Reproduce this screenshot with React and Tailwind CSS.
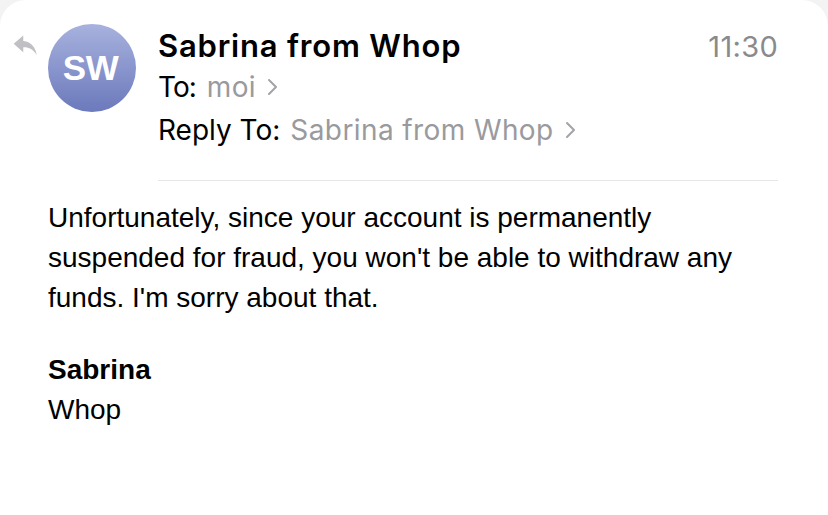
import React from "react";

const header = { fontFamily: "Inter, 'Liberation Sans', sans-serif" };
const body = { fontFamily: "'Liberation Sans', Arial, sans-serif" };

function ReplyIcon() {
  return (
    <svg viewBox="0 0 24 20" className="w-[27px] h-[23px]" fill="#bfbfc4">
      <path d="M10 1 L1.5 8.5 L10 16 V11.6 C15 11.4 18.6 13.2 22 18.5 C21 12.5 17.5 6.6 10 6 Z" />
    </svg>
  );
}

function Chevron() {
  return (
    <svg viewBox="0 0 11 18" className="w-[11px] h-[18px] ml-[11px] inline-block" fill="none" stroke="#a3a3a8" strokeWidth="2" strokeLinecap="round" strokeLinejoin="round">
      <path d="M2 2 L9 9 L2 16" />
    </svg>
  );
}

export default function App() {
  return (
    <div className="w-[828px] h-[515px] bg-[#f3f3f3] overflow-hidden">
      <div className="h-full bg-white rounded-t-[26px]">
        <div className="flex pt-[24px] pr-[50px]">
          <div className="w-[48px] flex justify-center pt-[10px] pl-[2px]">
            <ReplyIcon />
          </div>
          <div className="w-[88px] h-[88px] rounded-full bg-linear-to-b from-[#a8b2de] to-[#6c79bb] flex items-center justify-center shrink-0">
            <span className="text-white font-bold text-[35px] tracking-[-0.5px] -ml-[3px]" style={body}>SW</span>
          </div>
          <div className="flex-1 ml-[22px] mt-[2px]" style={header}>
            <div className="flex items-baseline justify-between">
              <span className="text-[31px] font-semibold text-black leading-[40px] tracking-[0.8px]">Sabrina from Whop</span>
              <span className="text-[29px] text-[#8a8a8e] leading-[40px] tracking-[0.3px]">11:30</span>
            </div>
            <div className="flex items-center text-[28px] leading-[40px] text-black">
              <span className="tracking-[-1px]">To:</span>
              <span className="ml-[11px] text-[#9a9a9e] tracking-[0.4px]">moi</span>
              <Chevron />
            </div>
            <div className="flex items-center text-[28px] leading-[44px] text-black mt-[1px]">
              <span>Reply To:</span>
              <span className="ml-[10px] text-[#9a9a9e] tracking-[0.4px]">Sabrina from Whop</span>
              <Chevron />
            </div>
          </div>
        </div>
        <div className="ml-[158px] mr-[50px] mt-[28px] h-px bg-[#e6e6e8]" />
        <div className="pl-[48px] pt-[17px] text-[28px] leading-[40px] text-black" style={body}>
          <p>
            Unfortunately, since your account is permanently
            <br />
            suspended for fraud, you won't be able to withdraw any
            <br />
            funds. I'm sorry about that.
          </p>
          <p className="mt-[32px] font-bold">Sabrina</p>
          <p>Whop</p>
        </div>
      </div>
    </div>
  );
}
